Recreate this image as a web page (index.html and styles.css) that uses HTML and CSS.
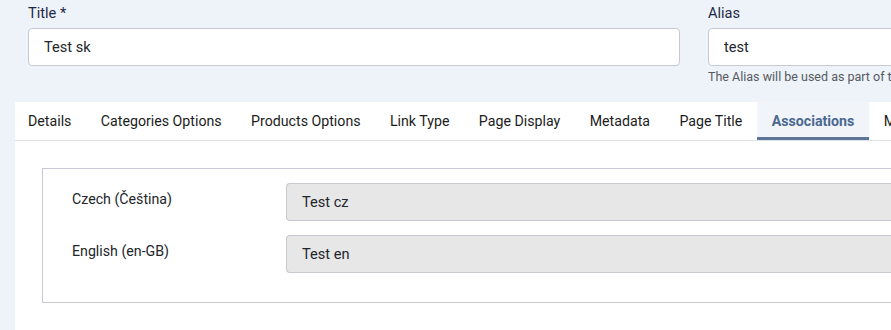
FILE: index.html
```html
<!DOCTYPE html>
<html lang="en">
<head>
  <meta charset="UTF-8">
  <meta name="viewport" content="width=device-width, initial-scale=1.0">
  <title>Edit Menu Item</title>
  <link rel="stylesheet" href="styles.css">
</head>
<body>
  <div class="top-fields">
    <div class="field title-field">
      <label for="title">Title *</label>
      <input type="text" id="title" value="Test sk">
    </div>
    <div class="field alias-field">
      <label for="alias">Alias</label>
      <input type="text" id="alias" value="test">
      <div class="hint">The Alias will be used as part of the URL.</div>
    </div>
  </div>

  <div class="tabset">
    <div class="tabs">
      <button class="tab">Details</button>
      <button class="tab">Categories Options</button>
      <button class="tab">Products Options</button>
      <button class="tab">Link Type</button>
      <button class="tab">Page Display</button>
      <button class="tab">Metadata</button>
      <button class="tab">Page Title</button>
      <button class="tab active">Associations</button>
      <button class="tab">Module Assignment</button>
    </div>
    <div class="tab-body">
      <fieldset class="assoc">
        <div class="assoc-row">
          <label>Czech (Čeština)</label>
          <input type="text" value="Test cz" readonly>
        </div>
        <div class="assoc-row">
          <label>English (en-GB)</label>
          <input type="text" value="Test en" readonly>
        </div>
      </fieldset>
    </div>
  </div>
</body>
</html>
```

FILE: styles.css
```css
body {
  margin: 0;
  background: #eef3fa;
  font-family: Roboto, "Liberation Sans", sans-serif;
  font-size: 14.2px;
  color: #22262a;
  overflow: hidden;
  width: 891px;
  height: 330px;
}
.top-fields {
  display: flex;
  gap: 28px;
  padding: 4px 0 0 28px;
  white-space: nowrap;
}
.field label {
  display: block;
  color: #1d2a45;
  font-size: 14.6px;
  line-height: 18px;
  margin-bottom: 6px;
}
.field input {
  box-sizing: border-box;
  height: 38px;
  border: 1px solid #c5cad4;
  border-radius: 4px;
  background: #fff;
  padding: 0 15px;
  font-family: inherit;
  font-size: 14.6px;
  color: #22262a;
}
.title-field input {
  width: 652px;
}
.alias-field input {
  width: 400px;
}
.hint {
  font-size: 12.5px;
  line-height: 15px;
  color: #555a60;
  margin-top: 3px;
}
.tabset {
  margin: 18px 0 0 15px;
  background: #fff;
  min-height: 300px;
}
.tabs {
  display: flex;
  height: 38px;
  border-bottom: 1px solid #dfe3e8;
  white-space: nowrap;
}
.tab {
  background: none;
  border: none;
  padding: 0 14.7px;
  font-family: inherit;
  font-size: 14.2px;
  color: #1c1c1c;
  height: 38px;
  cursor: pointer;
  flex-shrink: 0;
}
.tab:first-child {
  padding-left: 13px;
}
.tab.active {
  background: #f1f4f9;
  color: #4a6890;
  font-weight: 700;
  box-shadow: inset 0 -3px 0 #5b7597;
  border-radius: 2px 2px 0 0;
}
.tab-body {
  padding: 27px 0 0 27px;
}
.assoc {
  margin: 0;
  border: 1px solid #c8c9d6;
  border-right: none;
  padding: 14px 0 29px 29px;
}
.assoc-row {
  display: flex;
  align-items: flex-start;
}
.assoc-row + .assoc-row {
  margin-top: 14px;
}
.assoc-row label {
  width: 214px;
  padding-top: 7px;
  line-height: 18px;
}
.assoc-row input {
  flex: 1;
  box-sizing: border-box;
  height: 38px;
  border: 1px solid #c9c9d1;
  border-right: none;
  border-radius: 4px 0 0 4px;
  background: #e7e7e7;
  padding: 0 15px;
  font-family: inherit;
  font-size: 14.6px;
  color: #22262a;
}
```
